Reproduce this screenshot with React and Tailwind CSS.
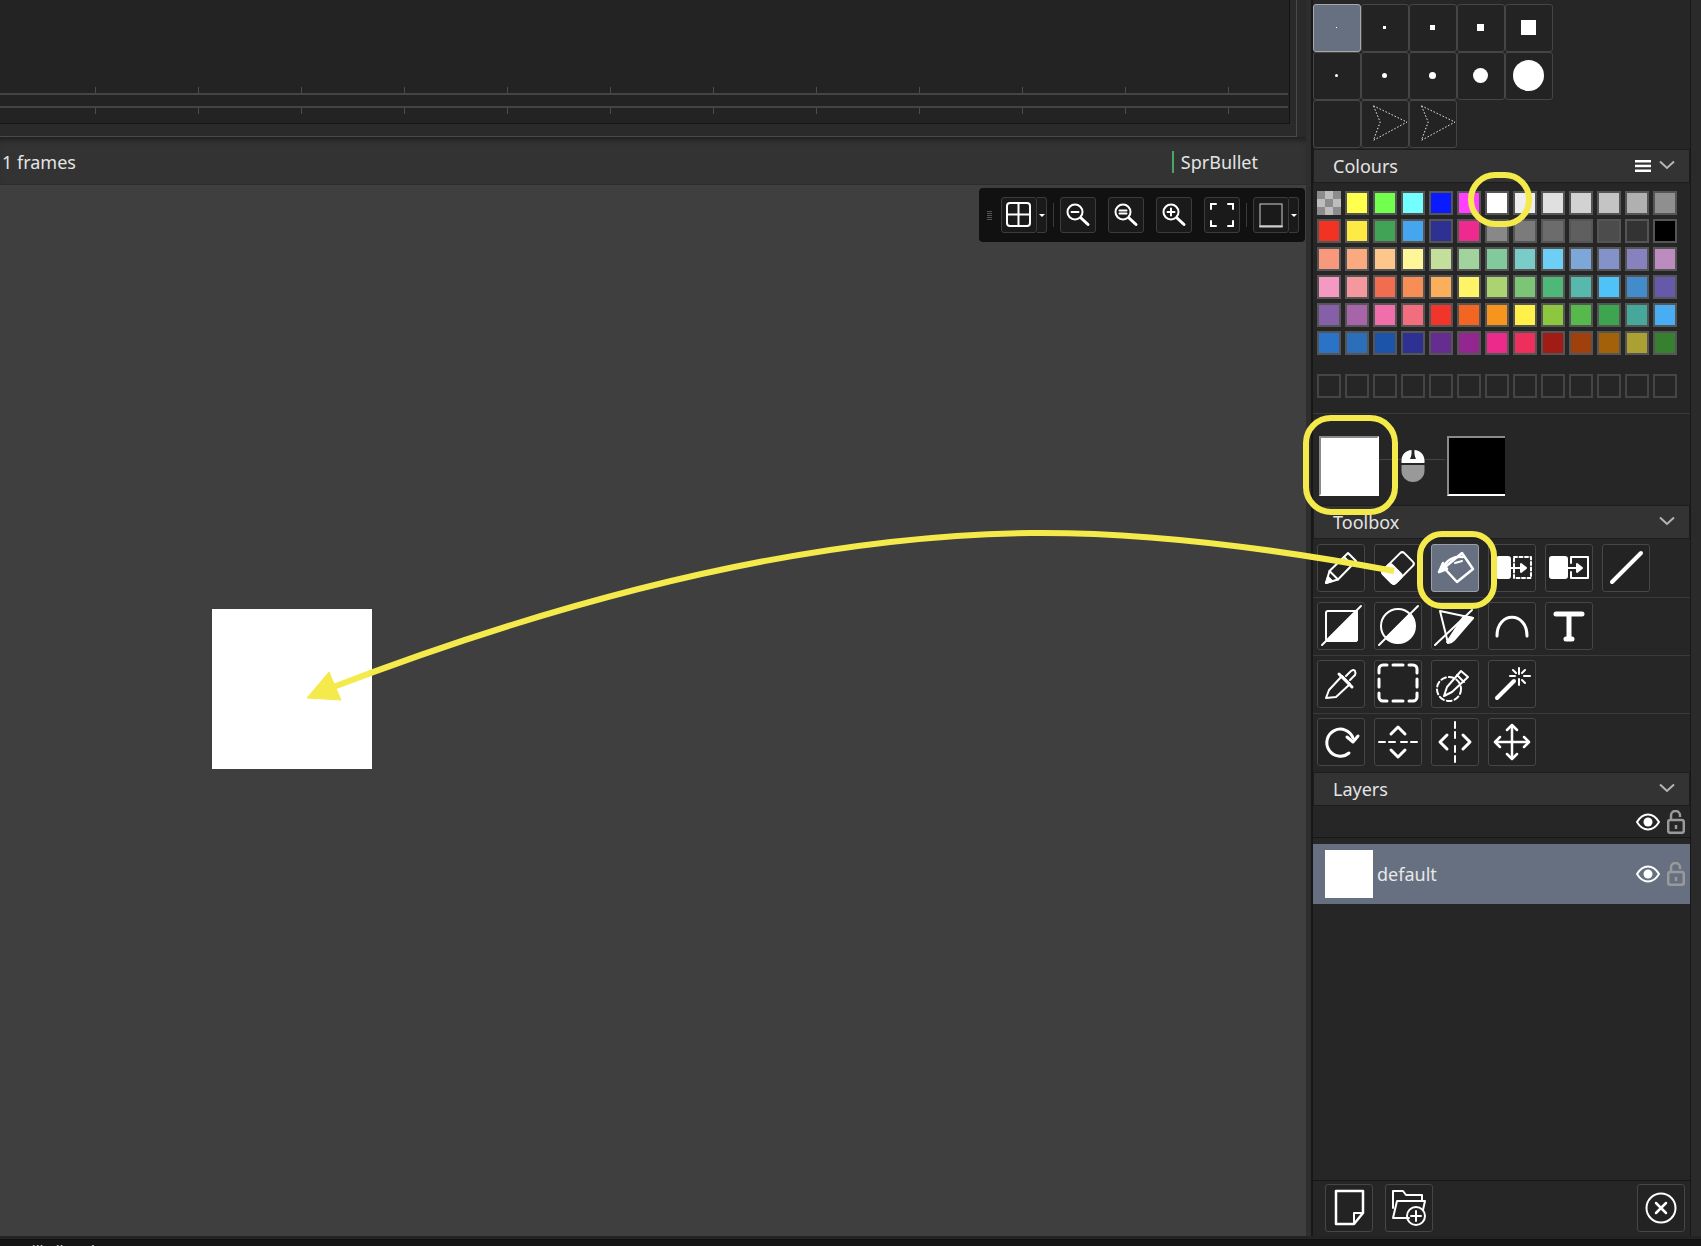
import React from "react";

const swatchRows = [
    ["checker", "#ffff4d", "#73ff4d", "#73ffff", "#0a1cff", "#ff40ff", "#ffffff", "#eeeeee", "#e0e0e0", "#d2d2d2", "#c4c4c4", "#b0b0b0", "#8f8f8f"],
    ["#f23324", "#fdea45", "#41a356", "#45a5ef", "#2e3192", "#ee2a8f", "#888888", "#7b7b7b", "#6c6c6c", "#5f5f5f", "#4c4c4c", "#333333", "#000000"],
    ["#f8997e", "#fba97f", "#fdc68a", "#fff599", "#c4df9b", "#a3d39c", "#82ca9c", "#7accc8", "#6dcff6", "#7da7d9", "#8393ca", "#8781bd", "#bd8cbf"],
    ["#f49ac2", "#f5989d", "#f26c4f", "#f68e55", "#fbaf5c", "#fff467", "#acd372", "#7cc576", "#4db878", "#57b9ae", "#4fc3f7", "#438ccb", "#6559ab"],
    ["#8560a8", "#a864a8", "#f06eaa", "#f26d7d", "#f2352a", "#f26522", "#f7941d", "#fff04a", "#8dc63f", "#57b84b", "#3da550", "#45a89a", "#49adf3"],
    ["#2a73c8", "#2a6fb8", "#1b54a8", "#2e3192", "#662d91", "#92278f", "#ec2a8c", "#ed2f5e", "#a01c14", "#a0410d", "#a36209", "#aba034", "#37802f"],
];

const ticks = [95, 198, 301, 404, 507, 610, 713, 816, 919, 1022, 1125, 1228];

function Chevron() {
    return (
        <svg className="mt-[-3px]" width="16" height="10" viewBox="0 0 16 10" fill="none" stroke="#b5b5b5" strokeWidth="2">
            <path d="M1 1.5 8 8l7-6.5" />
        </svg>
    );
}

function PanelHeader({ title, menu }) {
    return (
        <div className="flex h-[34px] items-center border border-[#1d1d1d] bg-[#333333] pl-[19px] pr-[14px] text-[18px] text-[#e4e4e4]">
            <span className="flex-1">{title}</span>
            {menu && (
                <svg width="16" height="12" viewBox="0 0 16 12" fill="#ffffff" className="mr-[8px]">
                    <rect width="16" height="2.5" />
                    <rect y="4.7" width="16" height="2.5" />
                    <rect y="9.5" width="16" height="2.5" />
                </svg>
            )}
            <Chevron />
        </div>
    );
}

function BrushCell({ children, active }) {
    return (
        <div className={`flex h-[48px] w-[48px] items-center justify-center rounded-[3px] border pb-[1px] pr-[1px] ${active ? "border-[#a8a8a8] bg-[#667080]" : "border-[#464646] bg-[#232323]"}`}>
            {children}
        </div>
    );
}

function Square({ size }) {
    return <div className="bg-white" style={{ width: size, height: size }} />;
}

function Dot({ size }) {
    return <div className="rounded-full bg-white" style={{ width: size, height: size }} />;
}

function DottedArrow() {
    return (
        <svg width="47" height="47" viewBox="0 0 47 47" fill="none" stroke="#ffffff" strokeWidth="1" strokeDasharray="1.5 2">
            <path d="M12 5 47 22 12 41 19 22Z" />
        </svg>
    );
}

function Swatch({ color }) {
    if (color === "checker") {
        return (
            <div className="grid h-[24px] w-[24px] grid-cols-3 grid-rows-3">
                {[0, 1, 2, 3, 4, 5, 6, 7, 8].map((i) => (
                    <div key={i} className={i % 2 ? "bg-[#bdbdbd]" : "bg-[#8c8c8c]"} />
                ))}
            </div>
        );
    }
    return <div className="h-[24px] w-[24px] border-2 border-[#555555]" style={{ backgroundColor: color }} />;
}

function Tool({ children, active, sw = 2.5 }) {
    return (
        <div className={`h-[48px] w-[48px] rounded-[3px] border ${active ? "border-[#9a9fa8] bg-[#667080]" : "border-[#464646] bg-[#232323]"}`}>
            <svg width="46" height="46" viewBox="1 1 46 46" fill="none" stroke="#ffffff" strokeWidth={sw} strokeLinecap="round" strokeLinejoin="round">
                {children}
            </svg>
        </div>
    );
}

function ToolRow({ children, divider = true }) {
    return (
        <div className={`flex gap-[9px] pl-[4px] ${divider ? "mb-[4px] border-b border-[#3a3a3a] pb-[5px]" : ""}`}>{children}</div>
    );
}

function Eye() {
    return (
        <svg width="24" height="18" viewBox="0 0 24 18" fill="none">
            <path d="M1 9c3-5 7-7.5 11-7.5S20 4 23 9c-3 5-7 7.5-11 7.5S4 14 1 9Z" stroke="#ffffff" strokeWidth="2" />
            <circle cx="12" cy="9" r="4.5" fill="#ffffff" />
        </svg>
    );
}

function Lock() {
    return (
        <svg width="18" height="24" viewBox="0 0 18 24" fill="none" stroke="#9a9a9a" strokeWidth="2.5">
            <rect x="1.2" y="10" width="15.6" height="12.800" rx="2" />
            <path d="M4 10V5.500a4.500 4.500 0 0 1 9 0V7" />
            <path d="M9 15v4" />
        </svg>
    );
}

function ZoomBtn({ children }) {
    return (
        <div className="h-[36px] w-[36px] rounded-[3px] border border-[#3c3c3c] bg-[#1a1a1a]">
            <svg width="34" height="34" viewBox="0 0 34 34" fill="none" stroke="#ffffff" strokeWidth="2" strokeLinecap="round">
                {children}
            </svg>
        </div>
    );
}

function Caret() {
    return (
        <div className="flex h-[36px] w-[10px] items-center justify-center rounded-r-[3px] border border-l-0 border-[#3c3c3c] bg-[#1a1a1a]">
            <div className="h-0 w-0 border-x-[3px] border-t-[3px] border-x-transparent border-t-white" />
        </div>
    );
}

function Glass({ mark }) {
    return (
        <>
            <circle cx="14" cy="14" r="7.5" />
            <path d="m20 20 7 6.500" strokeWidth="3" />
            {mark}
        </>
    );
}

function Timeline() {
    return (
        <div className="relative h-[137px] shrink-0 bg-[#2a2a2a] pr-[9px]">
            <div className="h-full border-b border-r border-[#4a4a4a] pb-[12px] pr-[6px]">
                <div className="flex h-full flex-col border-b border-r border-[#141414] bg-[#232323] pr-[1px] pt-[87px]">
                    <div className="relative h-[27px]">
                        <div className="mt-[6px] h-[2px] bg-[#444444]" />
                        <div className="mt-[11px] h-[2px] bg-[#444444]" />
                        {ticks.map((x) => (
                            <React.Fragment key={x}>
                                <div className="absolute top-0 h-[6px] w-[1px] bg-[#4c4c4c]" style={{ left: x }} />
                                <div className="absolute top-[21px] h-[6px] w-[1px] bg-[#4c4c4c]" style={{ left: x }} />
                            </React.Fragment>
                        ))}
                    </div>
                </div>
            </div>
        </div>
    );
}

function CanvasToolbar() {
    return (
        <div className="absolute left-[979px] top-[3px] flex h-[54px] w-[326px] items-center rounded-[4px] bg-[#111111] pl-[8px]">
            <div className="mr-[9px] flex w-[5px] flex-col gap-[1px]">
                <div className="h-[1px] bg-[#555555]" />
                <div className="h-[1px] bg-[#555555]" />
                <div className="h-[1px] bg-[#555555]" />
                <div className="h-[1px] bg-[#555555]" />
                <div className="h-[1px] bg-[#555555]" />
            </div>
            <ZoomBtn>
                <rect x="5" y="5" width="23" height="23" rx="3" />
                <path d="M16.500 5v23M5 16.500h23" />
            </ZoomBtn>
            <Caret />
            <div className="mx-[6px] h-[24px] w-[1px] bg-[#3a3a3a]" />
            <ZoomBtn>
                <Glass mark={<path d="M10.500 14h7" />} />
            </ZoomBtn>
            <div className="w-[12px]" />
            <ZoomBtn>
                <Glass mark={<path d="M10.500 12.500h7M10.500 15.500h7" />} />
            </ZoomBtn>
            <div className="w-[12px]" />
            <ZoomBtn>
                <Glass mark={<path d="M10.500 14h7M14 10.500v7" />} />
            </ZoomBtn>
            <div className="w-[12px]" />
            <ZoomBtn>
                <path d="M6 11V6h5M23 6h5v5M6 23v5h5M23 28h5v-5" />
            </ZoomBtn>
            <div className="mx-[6px] h-[24px] w-[1px] bg-[#3a3a3a]" />
            <ZoomBtn>
                <rect x="6" y="6" width="22" height="22" stroke="#cfcfcf" strokeWidth="1" />
                <path d="M6 28.500h22" stroke="#cfcfcf" />
            </ZoomBtn>
            <Caret />
        </div>
    );
}

function Annotations() {
    return (
        <svg className="pointer-events-none absolute left-0 top-0" width="1701" height="1246" viewBox="0 0 1701 1246" fill="none" stroke="#f5ea4b" strokeWidth="6">
            <path d="M1394 571C1250 544 1130 532 1030 533 800 536 560 600 328 689" />
            <path d="M307 698 341 700 329 672Z" fill="#f5ea4b" stroke="#f5ea4b" strokeWidth="1" />
            <rect x="1471" y="175" width="58" height="49" rx="24" />
            <rect x="1306" y="418" width="89" height="94" rx="25" />
            <rect x="1420" y="534" width="74" height="72" rx="22" />
        </svg>
    );
}

function RightPanel() {
    return (
        <div className="flex w-[378px] shrink-0 flex-col border-l border-[#171717] bg-[#262626]">
            <div className="grid grid-cols-[repeat(5,48px)] pt-[4px]">
                <BrushCell active><Square size={1} /></BrushCell>
                <BrushCell><Square size={3} /></BrushCell>
                <BrushCell><Square size={5} /></BrushCell>
                <BrushCell><Square size={7} /></BrushCell>
                <BrushCell><Square size={15} /></BrushCell>
                <BrushCell><Dot size={3} /></BrushCell>
                <BrushCell><Dot size={5} /></BrushCell>
                <BrushCell><Dot size={7} /></BrushCell>
                <BrushCell><Dot size={15} /></BrushCell>
                <BrushCell><Dot size={31} /></BrushCell>
                <BrushCell />
                <BrushCell><DottedArrow /></BrushCell>
                <BrushCell><DottedArrow /></BrushCell>
            </div>
            <div className="mt-[1px]">
                <PanelHeader title="Colours" menu />
            </div>
            <div className="grid grid-cols-[repeat(13,24px)] gap-[4px] pl-[4px] pt-[8px]">
                {swatchRows.flat().map((c, i) => (
                    <Swatch key={i} color={c} />
                ))}
            </div>
            <div className="grid grid-cols-[repeat(13,24px)] gap-[4px] border-b border-[#3a3a3a] pb-[15px] pl-[4px] pt-[19px]">
                {Array.from({ length: 13 }).map((_, i) => (
                    <div key={i} className="h-[24px] w-[24px] border-2 border-[#454545]" />
                ))}
            </div>
            <div className="flex h-[91px] items-start pl-[6px] pt-[22px]">
                <div className="h-[60px] w-[60px] border-2 border-[#8a8a8a] border-b-white border-r-white bg-white" />
                <div className="mt-[23px] h-[1px] w-[22px] bg-[#444444]" />
                <svg className="mt-[14px]" width="24" height="32" viewBox="0 0 24 32">
                    <path d="M10.500 0C5 .5 1 4 .5 10v3h23v-3C23 4 19 .5 13.500 0c-.5 4 .5 7 1.500 9h-6c1-2 2-5 1.500-9Z" fill="#ffffff" />
                    <path d="M.5 15v6c0 6 5 11 11.500 11S23.500 27 23.500 21v-6Z" fill="#999999" />
                </svg>
                <div className="mt-[23px] h-[1px] w-[20px] bg-[#444444]" />
                <div className="ml-[2px] h-[60px] w-[58px] border-b-2 border-l-2 border-t-2 border-b-white border-l-[#8a8a8a] border-t-[#8a8a8a] bg-black" />
            </div>
            <PanelHeader title="Toolbox" />
            <div className="pt-[5px]">
                <ToolRow>
                    <Tool sw={2}>
                        <path d="M9 39 12.500 27 31 9l8 8-18 18.500Z" />
                        <path d="M12.500 27l8.500 8.500M27 13l8 8" />
                        <path d="M9 39l2-6 4 4Z" fill="#ffffff" />
                    </Tool>
                    <Tool sw={2}>
                        <rect x="15" y="9" width="18" height="30" rx="3" transform="rotate(45 24 24)" />
                        <rect x="15" y="26" width="18" height="13" rx="3" fill="#ffffff" transform="rotate(45 24 24)" />
                    </Tool>
                    <Tool active>
                        <path d="M31 9 42 25 26 38 13 24Z" />
                        <path d="M13 24C14 16 24 12 32 13" />
                        <path d="M8 28 12 19 16 25Z" fill="#ffffff" />
                        <path d="M24 19l7-2" strokeWidth="2" />
                    </Tool>
                    <Tool sw={2}>
                        <rect x="9" y="13" width="13" height="21" rx="2" fill="#ffffff" />
                        <rect x="26" y="13" width="17" height="21" strokeDasharray="3 2.500" />
                        <path d="M22 24h12" />
                        <path d="M33 20l5 4-5 4Z" fill="#ffffff" />
                    </Tool>
                    <Tool sw={2}>
                        <rect x="5" y="13" width="17" height="21" rx="2" fill="#ffffff" />
                        <path d="M26 19v-6h17v21H26v-6" />
                        <path d="M20 24h14" />
                        <path d="M32 20l5 4-5 4Z" fill="#ffffff" />
                    </Tool>
                    <Tool sw={4}>
                        <path d="M10 38 39 9" />
                    </Tool>
                </ToolRow>
                <ToolRow>
                    <Tool sw={2}>
                        <rect x="9" y="9" width="31" height="30" rx="2" />
                        <path d="M40 9v28a2 2 0 0 1-2 2H10Z" fill="#ffffff" />
                        <path d="M5 43 44 4" />
                    </Tool>
                    <Tool sw={2}>
                        <circle cx="24" cy="24" r="17" />
                        <path d="M36 12A17 17 0 0 1 12 36Z" fill="#ffffff" />
                        <path d="M5 43 44 4" />
                    </Tool>
                    <Tool sw={2}>
                        <path d="M9 9 42 16 17 41Z" />
                        <path d="M33 14 42 16 23 38Q19 42 16 40Z" fill="#ffffff" />
                        <path d="M4 43 41 8" />
                    </Tool>
                    <Tool sw={3}>
                        <path d="M9 34C9 9 39 9 39 34" />
                    </Tool>
                    <Tool sw={5}>
                        <path d="M11 12h26M24 12v25M21 37h6" />
                    </Tool>
                </ToolRow>
                <ToolRow>
                    <Tool sw={2}>
                        <path d="M9 38l3-8 13-14 8 8-14 13Z" />
                        <path d="M22 14l13 13" strokeWidth="3" />
                        <path d="M29 16l5-5q3-2 4 0t0 4l-5 5" />
                    </Tool>
                    <Tool sw={3}>
                        <path d="M5 13V9a4 4 0 0 1 4-4h4M19 5h10M35 5h4a4 4 0 0 1 4 4v4M43 19v8M43 33v4a4 4 0 0 1-4 4h-4M29 41H19M13 41H9a4 4 0 0 1-4-4v-4M5 27v-8" />
                    </Tool>
                    <Tool sw={2}>
                        <circle cx="18" cy="29" r="12" strokeDasharray="5 3" />
                        <path d="M13 36l3-9 14-16 7 6-16 15Z" />
                        <path d="M26 15l7 7" />
                    </Tool>
                    <Tool sw={2}>
                        <path d="M9 38 26 21" strokeWidth="4" />
                        <path d="M31 8v6M31 19v6M22 16h5M36 16h6M25 10l3 3M37 10l-3 3M37 23l-3-3" />
                    </Tool>
                </ToolRow>
                <ToolRow divider={false}>
                    <Tool sw={3}>
                        <path d="M36 20A13.500 13.500 0 1 0 32 35" />
                        <path d="M30 19l6 5 5-6" />
                    </Tool>
                    <Tool sw={3}>
                        <path d="M5 24h6M15 24h6M27 24h6M37 24h6" strokeWidth="2" />
                        <path d="M17 16l7-7 7 7M17 32l7 7 7-7" />
                    </Tool>
                    <Tool sw={3}>
                        <path d="M24 4v6M24 14v6M24 28v6M24 38v6" strokeWidth="2" />
                        <path d="M16 17l-7 7 7 7M32 17l7 7-7 7" />
                    </Tool>
                    <Tool sw={2.500}>
                        <path d="M24 8v32M8 24h32" />
                        <path d="M19 12l5-5 5 5M19 36l5 5 5-5M12 19l-5 5 5 5M36 19l5 5-5 5" />
                    </Tool>
                </ToolRow>
            </div>
            <div className="mt-[6px]">
                <PanelHeader title="Layers" />
            </div>
            <div className="flex h-[32px] items-center justify-end gap-[7px] border-b border-[#171717] pr-[5px]">
                <Eye />
                <Lock />
            </div>
            <div className="mt-[6px] flex h-[60px] items-center bg-[#667080] pl-[12px] pr-[5px] text-[18px] text-[#e8e8e8]">
                <div className="h-[48px] w-[48px] bg-white" />
                <span className="ml-[4px] flex-1">default</span>
                <div className="flex items-center gap-[7px]">
                    <Eye />
                    <Lock />
                </div>
            </div>
            <div className="flex-1 border-b border-[#171717]" />
            <div className="flex h-[55px] items-start pl-[12px] pr-[5px] pt-[3px]">
                <Tool sw={2.500}>
                    <path d="M11 7h27v22l-9 11H11Z" />
                    <path d="M38 29H29v11" strokeWidth="2" />
                </Tool>
                <div className="w-[12px]" />
                <Tool sw={2}>
                    <path d="M8 24V7h10l3 4h16v6" />
                    <path d="M8 34 12 17h28l-2 9M8 34h16" />
                    <circle cx="31" cy="32" r="9" />
                    <path d="M26 32h10M31 27v10" />
                </Tool>
                <div className="flex-1" />
                <Tool sw={2}>
                    <circle cx="24" cy="24" r="14.500" />
                    <path d="M19 19l10 10M29 19 19 29" strokeWidth="2.500" />
                </Tool>
            </div>
        </div>
    );
}

export default function App() {
    return (
        <div className="relative flex h-[1246px] w-[1701px] flex-col overflow-hidden bg-[#2a2a2a] font-['Noto_Sans',sans-serif]">
            <div className="flex h-[1236px] shrink-0">
                <div className="flex w-[1306px] shrink-0 flex-col">
                    <Timeline />
                    <div className="flex h-[48px] shrink-0 items-center border-b border-[#2c2c2c] bg-[#333333] pl-[2px] pr-[48px] pt-[3px] text-[18px] text-[#e4e4e4] shadow-[inset_0_6px_6px_-4px_#1a1a1a]">
                        <span className="flex-1">1 frames</span>
                        <span className="border-l-2 border-[#4aa564] pl-[7px] leading-[22px]">SprBullet</span>
                    </div>
                    <div className="relative flex-1 bg-[#3f3f3f]">
                        <CanvasToolbar />
                        <div className="absolute left-[212px] top-[424px] h-[160px] w-[160px] bg-white" />
                    </div>
                </div>
                <div className="w-[5px] shrink-0 bg-[#2e2e2e]" />
                <div className="w-[1px] shrink-0 bg-[#171717]" />
                <RightPanel />
                <div className="flex-1 border-l border-[#171717] bg-[#2a2a2a]" />
            </div>
            <div className="h-[3px] shrink-0 bg-[#242424]" />
            <div className="h-[7px] shrink-0 overflow-hidden border-t border-[#111111] bg-[#151515] pl-[24px] text-[15px] leading-[26px] text-[#d5d5d5]">
                <div className="mt-[-3px]">Fill all tool</div>
            </div>
            <Annotations />
        </div>
    );
}
